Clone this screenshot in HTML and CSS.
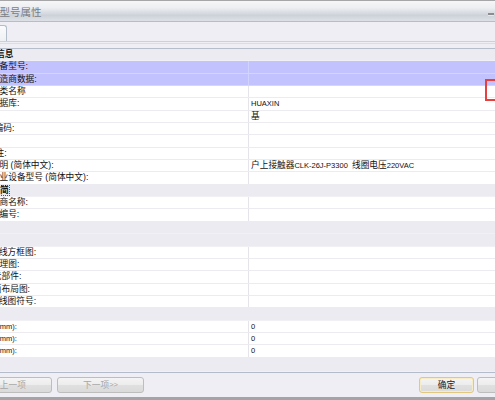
FILE: index.html
```html
<!DOCTYPE html>
<html lang="zh-CN">
<head>
<meta charset="utf-8">
<title>型号属性</title>
<link rel="stylesheet" href="styles.css">
</head>
<body>
<div class="win">
  <div class="title">
    <span class="title-text">型号属性</span>
    <span class="min"></span>
  </div>
  <div class="tabs">
    <div class="tabrow"><div class="tab"></div></div>
    <div class="tl1"></div>
    <div class="tl-gap"></div>
    <div class="tl2"></div>
  </div>
  <div class="grid">
    <div class="sec i21">基本信息</div>
    <div class="row sel"><div class="k i9">设备型号:</div><div class="v"></div></div>
    <div class="row sel"><div class="k i9">制造商数据:</div><div class="v"></div></div>
    <div class="row"><div class="k i9">分类名称</div><div class="v"></div></div>
    <div class="row"><div class="k i9">数据库:</div><div class="v"><span class="lat">HUAXIN</span></div></div>
    <div class="row"><div class="k"></div><div class="v">基</div></div>
    <div class="row"><div class="k i5">编码:</div><div class="v"></div></div>
    <div class="row"><div class="k"></div><div class="v"></div></div>
    <div class="row"><div class="k i4">注:</div><div class="v"></div></div>
    <div class="row"><div class="k i9">说明 (简体中文):</div><div class="v">户上接触器<span class="lat">CLK-26J-P3300&nbsp;&nbsp;</span>线圈电压<span class="lat">220VAC</span></div></div>
    <div class="row"><div class="k i9">企业设备型号 (简体中文):</div><div class="v"></div></div>
    <div class="sec"><span class="focus">精简</span></div>
    <div class="row"><div class="k i18">制造商名称:</div><div class="v"></div></div>
    <div class="row"><div class="k i18">商品编号:</div><div class="v"></div></div>
    <div class="sec"></div>
    <div class="sec"></div>
    <div class="row"><div class="k i9b">接线方框图:</div><div class="v"></div></div>
    <div class="row"><div class="k i9">原理图:</div><div class="v"></div></div>
    <div class="row"><div class="k i6">元部件:</div><div class="v"></div></div>
    <div class="row"><div class="k i6">面布局图:</div><div class="v"></div></div>
    <div class="row"><div class="k i9b">接线图符号:</div><div class="v"></div></div>
    <div class="sec"></div>
    <div class="row"><div class="k i20">高度<span class="lat">(mm):</span></div><div class="v"><span class="lat">0</span></div></div>
    <div class="row"><div class="k i20">宽度<span class="lat">(mm):</span></div><div class="v"><span class="lat">0</span></div></div>
    <div class="row"><div class="k i20">深度<span class="lat">(mm):</span></div><div class="v"><span class="lat">0</span></div></div>
    <div class="sec last"></div>
  </div>
  <div class="sep"></div>
  <div class="bar">
    <div class="btn prev"><span class="lat">&lt;&lt;</span>上一项</div>
    <div class="btn next">下一项<span class="lat">&gt;&gt;</span></div>
    <div class="btn ok">确定</div>
    <div class="btn cancel">取消</div>
  </div>
  <div class="frame"></div>
</div>
<div class="mark"></div>
</body>
</html>
```
FILE: styles.css
```css
* { box-sizing: border-box; }
html, body { margin: 0; padding: 0; }
body {
  width: 495px;
  height: 400px;
  overflow: hidden;
  position: relative;
  background: #efeef4;
  font: 8.7px "Liberation Sans", "Noto Sans CJK SC", sans-serif;
  color: #111;
}
.win { display: flex; flex-direction: column; height: 400px; }

.title {
  height: 22px;
  flex: none;
  border-top: 1px solid #a6a6a8;
  border-bottom: 1px solid #b5bdca;
  background: linear-gradient(#f6f6f8 0%, #eceef1 35%, #cdd2da 72%, #dde1e7 100%);
  display: flex;
  align-items: center;
  padding-right: 1px;
}
.title-text {
  font-family: "Noto Sans CJK SC", sans-serif;
  font-size: 10.5px;
  color: #7c7c84;
  text-indent: -0.5px;
  line-height: 20px;
  margin-top: 1px;
}
.min {
  margin-left: auto;
  margin-top: 5px;
  width: 6px;
  height: 2px;
  background: #8c8c90;
  box-shadow: 0 1px 0 #e8e8ec;
}

.tabs { height: 26px; flex: none; display: flex; flex-direction: column; }
.tabrow { height: 19px; display: flex; align-items: flex-end; }
.tab {
  width: 7px;
  height: 16px;
  border: 1px solid #b3bdca;
  border-left: 0;
  border-bottom: 0;
  border-top-right-radius: 3px;
  background: linear-gradient(#fbfbfd, #eef0f3);
}
.tl1 { height: 1px; background: #cfd0d6; }
.tl-gap { height: 1px; }
.tl2 { height: 1px; background: #dcdde2; }

.grid {
  flex: 1;
  min-height: 0;
  display: flex;
  flex-direction: column;
  border-top: 1px solid #b6bdcb;
}
.row {
  height: 12.35px;
  flex: none;
  display: grid;
  grid-template-columns: 249px 1fr;
  background: #fff;
  border-bottom: 1px solid #ececf0;
  line-height: 11px;
  white-space: nowrap;
}
.row .k { border-right: 1px solid #e4e4ea; overflow: hidden; }
.row .v { padding-left: 2px; overflow: hidden; }
.row.sel { background: #c2c2fe; border-bottom-color: #d4d4ff; }
.row.sel .k { border-right-color: #d2d2ff; }

.sec {
  height: 12.35px;
  flex: none;
  background: #ecebf1;
  border-bottom: 1px solid #f1f0f5;
  font-weight: bold;
  line-height: 11px;
  white-space: nowrap;
  overflow: hidden;
}
.sec.last { flex: 1; }
.focus {
  display: inline-block;
  margin-left: -9.7px;
  padding-right: 0.5px;
  border: 1px dotted #555;
  line-height: 9px;
}

.i21 { text-indent: -21.4px; }
.i20 { text-indent: -20px; }
.i18 { text-indent: -17.9px; }
.i9 { text-indent: -9.2px; }
.i9b { text-indent: -9.8px; }
.i6 { text-indent: -7.2px; }
.i5 { text-indent: -5.5px; }
.i4 { text-indent: -4.5px; }

.lat { font-size: 7.5px; font-family: "Liberation Sans", sans-serif; }

.sep { height: 1px; flex: none; background: #b4bccb; }
.bar {
  height: 24px;
  flex: none;
  padding-top: 4px;
  display: flex;
  align-items: flex-start;
}
.btn {
  flex: none;
  height: 16px;
  width: 87px;
  border: 1px solid #bdbdbd;
  border-radius: 3px;
  background: linear-gradient(#f4f4f4 0%, #ececec 50%, #e0e0e0 51%, #dadada 100%);
  display: flex;
  align-items: center;
  justify-content: center;
  color: #a6a6a6;
  line-height: 12px;
}
.prev { margin-left: -35px; }
.next { margin-left: 5px; }
.ok {
  margin-left: auto;
  width: 55px;
  border-color: #e2c77e;
  color: #222;
  box-shadow: inset 0 0 0 1px #f7ecc8;
}
.cancel { width: 55px; margin-left: 3px; margin-right: -37px; color: #222; }

.frame { height: 3px; flex: none; background: #a4a4a6; }

.mark {
  position: absolute;
  left: 485px;
  top: 79px;
  width: 14px;
  height: 22px;
  border: 2px solid #e8403f;
}
```
